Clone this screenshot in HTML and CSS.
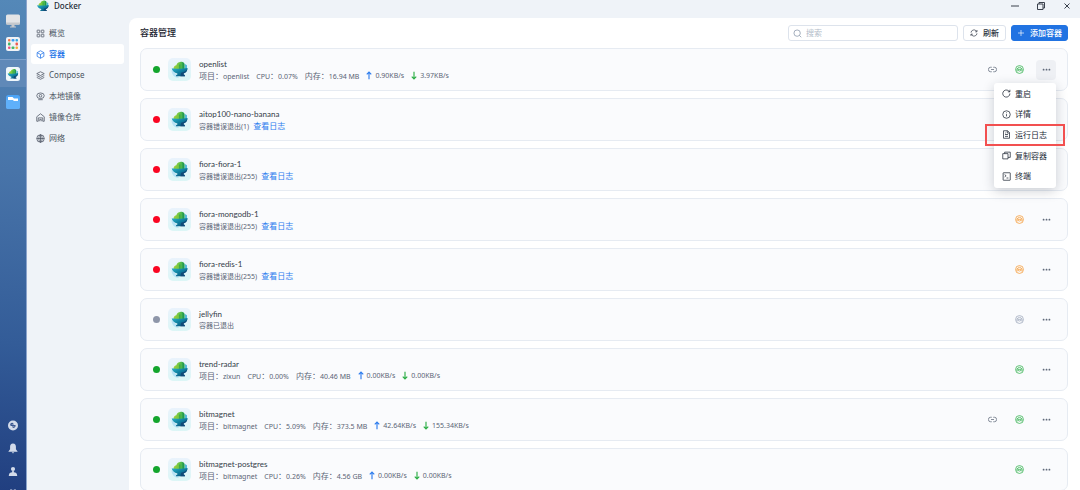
FILE: index.html
```html
<!DOCTYPE html>
<html lang="zh-CN">
<head>
<meta charset="utf-8">
<title>Docker</title>
<link rel="stylesheet" href="styles.css">
</head>
<body>
<svg class="sprite" aria-hidden="true">
  <defs>
    <linearGradient id="g-bowl" x1="0" y1="0" x2="1" y2="1"><stop offset="0" stop-color="#2fb4cc"/><stop offset=".5" stop-color="#0f7f9f"/><stop offset="1" stop-color="#124a78"/></linearGradient>
    <linearGradient id="g-leaf" x1="0" y1="0" x2="1" y2="0"><stop offset="0" stop-color="#a5d036"/><stop offset=".5" stop-color="#6cc644"/><stop offset="1" stop-color="#28a55a"/></linearGradient>
    <linearGradient id="g-tile" x1="0" y1="0" x2="0" y2="1"><stop offset="0" stop-color="#eaf3fc"/><stop offset="1" stop-color="#dcf6f6"/></linearGradient>
    <linearGradient id="g-folder" x1="0" y1="0" x2="0" y2="1"><stop offset="0" stop-color="#4aa2f5"/><stop offset="1" stop-color="#6bb8fb"/></linearGradient>
  </defs>
  <symbol id="plant" viewBox="0 0 24 24">
    <path fill="url(#g-leaf)" d="M3 12c-.5-3 1-5.500 4-6C8 3 10.500 1.500 12.500 1.500c1-.8 4-.8 5 .5 1 .5 1.500 1.500 1.500 3v7z"/>
    <path fill="#22994e" d="M11.500 5h1.300v7h-1.300zM16 2.500c1.500 0 2.500 1 2.500 2.500V12H16z"/>
    <path fill="#4fb8d8" d="M19.500 4.500l3 1.500v7l-3-1z"/>
    <path fill="url(#g-bowl)" d="M0 10.500c6 1 16 1 23.500-.5-.3 4.500-2.500 7-6 8v1.500c1.500.3 2 1 2 2.500H6.500c0-1.500.5-2.200 2-2.500V18C4 17 1 14.500 0 10.500z"/>
    <path fill="#124a78" d="M14 17c4-.5 7-2.500 9-5-.8 3.500-2.500 5.300-5.500 6v1.500c1.500.3 2 1 2 2.500H13z"/>
  </symbol>
  <symbol id="logo" viewBox="0 0 46 46"><rect width="46" height="46" rx="10" fill="url(#g-tile)"/><path fill="#a8dcf4" opacity=".7" d="M7 24c5 2 11 11 15 16-8 0-15-6-15-16z"/><use href="#plant" x="7" y="6" width="33" height="33"/></symbol>
  <symbol id="grid" viewBox="0 0 24 24"><rect x="3" y="3" width="7" height="7" rx="1"/><rect x="14" y="3" width="7" height="7" rx="1"/><rect x="3" y="14" width="7" height="7" rx="1"/><rect x="14" y="14" width="7" height="7" rx="1"/></symbol>
  <symbol id="cube" viewBox="0 0 24 24"><path d="M12 2l9 5v10l-9 5-9-5V7zM3 7l9 5 9-5M12 12v10"/></symbol>
  <symbol id="layers" viewBox="0 0 24 24"><path d="M12 2l10 5-10 5L2 7zM2 12l10 5 10-5M2 17l10 5 10-5"/></symbol>
  <symbol id="disk" viewBox="0 0 24 24"><ellipse cx="12" cy="10" rx="10" ry="7.500"/><circle cx="12" cy="10" r="3.500"/><path d="M6 20.500h12"/></symbol>
  <symbol id="house" viewBox="0 0 24 24"><path d="M2 22V10l10-8 10 8v12h-4v-9H6v9zM10 22v-5h4v5"/></symbol>
  <symbol id="globe" viewBox="0 0 24 24"><circle cx="12" cy="12" r="10"/><ellipse cx="12" cy="12" rx="4.500" ry="10"/><path d="M2 12h20M12 2v20"/></symbol>
  <symbol id="search" viewBox="0 0 24 24"><circle cx="11" cy="11" r="8.500"/><path d="M17.500 17.500L22 22"/></symbol>
  <symbol id="sync" viewBox="0 0 24 24"><path d="M3 11a9 9 0 0 1 16-5l2 2M21 3v5.500h-5.500M21 13a9 9 0 0 1-16 5l-2-2M3 21v-5.500h5.500"/></symbol>
  <symbol id="plus" viewBox="0 0 24 24"><path d="M12 3v18M3 12h18"/></symbol>
  <symbol id="link" viewBox="0 0 24 24"><path d="M10 6H7a6 6 0 0 0 0 12h3M14 6h3a6 6 0 0 1 0 12h-3M8 12h8"/></symbol>
  <symbol id="swirl" viewBox="0 0 24 24"><circle cx="12" cy="12" r="10.500"/><path d="M6 17a7 7 0 1 1 12 0"/><path d="M7.500 11.500h9a4.500 4.500 0 0 1-9 0z"/></symbol>
  <symbol id="dots" viewBox="0 0 24 24"><g fill="currentColor" stroke="none"><rect x="2" y="10" width="4.500" height="4.500" rx="1.500"/><rect x="9.800" y="10" width="4.500" height="4.500" rx="1.500"/><rect x="17.500" y="10" width="4.500" height="4.500" rx="1.500"/></g></symbol>
  <symbol id="up" viewBox="0 0 16 24"><path d="M8 22V3M2 9l6-6 6 6"/></symbol>
  <symbol id="down" viewBox="0 0 16 24"><path d="M8 2v19M2 15l6 6 6-6"/></symbol>
  <symbol id="restart" viewBox="0 0 24 24"><path d="M21 12a9.500 9.500 0 1 1-3.500-7.200L21 7.500M21 2v5.500h-5.500"/></symbol>
  <symbol id="info" viewBox="0 0 24 24"><circle cx="12" cy="12" r="10"/><path d="M12 11v6M12 6.500v2"/></symbol>
  <symbol id="log" viewBox="0 0 24 24"><path d="M4 2h11l5 5v15H4zM14 2v6h6M8 12h8M8 17h8M8 8h2"/></symbol>
  <symbol id="copy" viewBox="0 0 24 24"><path d="M2 7h14v14H2zM7 7V3h15v14h-6"/></symbol>
  <symbol id="term" viewBox="0 0 24 24"><rect x="3" y="2" width="19" height="20" rx="1"/><path d="M7 7l4 3-4 3M12 16h5"/></symbol>
</svg>

<div class="desktop">
  <aside class="dock">
    <button class="dock-item" aria-label="桌面"><svg viewBox="0 0 28 28"><rect x="0" y="1" width="28" height="20" rx="3" fill="#e3e4e6"/><path fill="#c5c8cc" d="M0 17h28v1.500a3 3 0 0 1-3 3H3a3 3 0 0 1-3-3zM11 21h6v4h-6zM8 25h12v2H8z"/></svg></button>
    <button class="dock-item" aria-label="应用"><svg viewBox="0 0 28 28"><rect width="28" height="28" rx="4" fill="#f1f3f6"/><rect x="4" y="4" width="5" height="5" rx="2" fill="#f2784b"/><rect x="11" y="4" width="6" height="5" rx="2" fill="#3f9cf0"/><rect x="19" y="4" width="5" height="5" rx="2" fill="#3aa7dd"/><rect x="4" y="11" width="5" height="6" rx="2" fill="#3cb464"/><rect x="19" y="11" width="5" height="6" rx="2" fill="#ef5b50"/><rect x="4" y="19" width="5" height="5" rx="2" fill="#eb4f7d"/><rect x="11" y="19" width="6" height="5" rx="2" fill="#46b86a"/><rect x="19" y="19" width="5" height="5" rx="2" fill="#f5ad35"/></svg></button>
    <button class="dock-item dock-item--active" aria-label="Docker"><svg viewBox="0 0 28 28"><rect width="28" height="28" rx="5" fill="#f0f7fb"/><use href="#plant" x="3" y="3" width="22" height="22"/></svg></button>
    <button class="dock-item" aria-label="文件"><svg viewBox="0 0 28 28"><rect width="28" height="28" rx="5" fill="url(#g-folder)"/><path fill="#fff" d="M4 4h9l3 3h8v5H16l-3-2H4z"/><path fill="#5fb0fa" d="M0 10h12l3 2h13v11a5 5 0 0 1-5 5H5a5 5 0 0 1-5-5z"/></svg></button>
    <div class="dock-foot">
      <button class="dock-tool" aria-label="加速"><svg viewBox="0 0 24 24"><circle cx="12" cy="12" r="12" fill="#d3dbea"/><path fill="#3a5790" d="M6 7c2-2 6-2 7 0v4h5c1 3-1 6-4 7-3 0-4-2-3-5H7c-2-1-2-4-1-6z"/><path fill="#d3dbea" d="M9 9h2v2H9zM13 14h2v2h-2z"/></svg></button>
      <button class="dock-tool" aria-label="通知"><svg viewBox="0 0 24 24" fill="#d3dbea"><path d="M12 0c5 0 7 4 7 8v6l4 5v1H1v-1l4-5V8c0-4 2-8 7-8zM9 21h6l-3 3z"/></svg></button>
      <button class="dock-tool" aria-label="用户"><svg viewBox="0 0 24 24" fill="#d3dbea"><circle cx="12" cy="6" r="5"/><path d="M10 10h4v4c5 0 7 2 8 7v2H2v-2c1-5 3-7 8-7z"/></svg></button>
      <button class="dock-tool" aria-label="菜单"><svg viewBox="0 0 24 24" fill="#d3dbea"><rect x="5" y="0" width="5" height="5"/><rect x="14" y="0" width="5" height="5"/></svg></button>
    </div>
  </aside>

  <div class="window">
    <header class="titlebar">
      <svg class="titlebar-logo"><use href="#plant"/></svg>
      <span class="titlebar-name">Docker</span>
      <button class="win-btn" aria-label="最小化"><svg viewBox="0 0 16 16"><path d="M0 8h16"/></svg></button>
      <button class="win-btn" aria-label="还原"><svg viewBox="0 0 16 16"><path d="M4 4V1h11v11h-3M1 4h11v11H1z"/></svg></button>
      <button class="win-btn win-btn--close" aria-label="关闭"><svg viewBox="0 0 16 16"><path d="M3 3l10 10M13 3L3 13"/></svg></button>
    </header>

    <nav class="side">
      <a class="side-item" href="#"><svg class="icon"><use href="#grid"/></svg>概览</a>
      <a class="side-item side-item--active" href="#"><svg class="icon"><use href="#cube"/></svg>容器</a>
      <a class="side-item" href="#"><svg class="icon"><use href="#layers"/></svg>Compose</a>
      <a class="side-item" href="#"><svg class="icon"><use href="#disk"/></svg>本地镜像</a>
      <a class="side-item" href="#"><svg class="icon"><use href="#house"/></svg>镜像仓库</a>
      <a class="side-item" href="#"><svg class="icon"><use href="#globe"/></svg>网络</a>
    </nav>

    <main class="main">
      <div class="toolbar">
        <h1 class="toolbar-title">容器管理</h1>
        <label class="search"><svg class="icon"><use href="#search"/></svg><input class="search-input" type="text" placeholder="搜索" aria-label="搜索"></label>
        <button class="btn"><svg class="icon"><use href="#sync"/></svg>刷新</button>
        <button class="btn btn--primary"><svg class="icon"><use href="#plus"/></svg>添加容器</button>
      </div>

      <div class="list">
        <article class="card">
          <span class="dot dot--green"></span><svg class="logo"><use href="#logo"/></svg>
          <div class="info">
            <div class="name">openlist</div>
            <div class="meta"><span><span class="cn">项目：</span>openlist</span><span>CPU<span class="cn">：</span>0.07%</span><span><span class="cn">内存：</span>16.94 MB</span><span class="rate"><svg class="arrow arrow--up"><use href="#up"/></svg>0.90KB/s</span><span class="rate"><svg class="arrow arrow--down"><use href="#down"/></svg>3.97KB/s</span></div>
          </div>
          <div class="actions">
            <button class="act" aria-label="链接"><svg class="icon"><use href="#link"/></svg></button>
            <button class="act act--green" aria-label="状态"><svg class="icon"><use href="#swirl"/></svg></button>
            <button class="act act--open" aria-label="更多"><svg class="icon"><use href="#dots"/></svg></button>
            <div class="menu">
              <button class="menu-item"><svg class="icon"><use href="#restart"/></svg>重启</button>
              <button class="menu-item"><svg class="icon"><use href="#info"/></svg>详情</button>
              <button class="menu-item menu-item--marked"><svg class="icon"><use href="#log"/></svg>运行日志</button>
              <button class="menu-item"><svg class="icon"><use href="#copy"/></svg>复制容器</button>
              <button class="menu-item"><svg class="icon"><use href="#term"/></svg>终端</button>
            </div>
          </div>
        </article>

        <article class="card">
          <span class="dot dot--red"></span><svg class="logo"><use href="#logo"/></svg>
          <div class="info">
            <div class="name">aitop100-nano-banana</div>
            <div class="status">容器错误退出(1)<a class="log-link" href="#">查看日志</a></div>
          </div>
        </article>

        <article class="card">
          <span class="dot dot--red"></span><svg class="logo"><use href="#logo"/></svg>
          <div class="info">
            <div class="name">fiora-fiora-1</div>
            <div class="status">容器错误退出(255)<a class="log-link" href="#">查看日志</a></div>
          </div>
        </article>

        <article class="card">
          <span class="dot dot--red"></span><svg class="logo"><use href="#logo"/></svg>
          <div class="info">
            <div class="name">fiora-mongodb-1</div>
            <div class="status">容器错误退出(255)<a class="log-link" href="#">查看日志</a></div>
          </div>
          <div class="actions">
            <button class="act act--orange" aria-label="状态"><svg class="icon"><use href="#swirl"/></svg></button>
            <button class="act" aria-label="更多"><svg class="icon"><use href="#dots"/></svg></button>
          </div>
        </article>

        <article class="card">
          <span class="dot dot--red"></span><svg class="logo"><use href="#logo"/></svg>
          <div class="info">
            <div class="name">fiora-redis-1</div>
            <div class="status">容器错误退出(255)<a class="log-link" href="#">查看日志</a></div>
          </div>
          <div class="actions">
            <button class="act act--orange" aria-label="状态"><svg class="icon"><use href="#swirl"/></svg></button>
            <button class="act" aria-label="更多"><svg class="icon"><use href="#dots"/></svg></button>
          </div>
        </article>

        <article class="card">
          <span class="dot dot--gray"></span><svg class="logo"><use href="#logo"/></svg>
          <div class="info">
            <div class="name">jellyfin</div>
            <div class="status">容器已退出</div>
          </div>
          <div class="actions">
            <button class="act act--gray" aria-label="状态"><svg class="icon"><use href="#swirl"/></svg></button>
            <button class="act" aria-label="更多"><svg class="icon"><use href="#dots"/></svg></button>
          </div>
        </article>

        <article class="card">
          <span class="dot dot--green"></span><svg class="logo"><use href="#logo"/></svg>
          <div class="info">
            <div class="name">trend-radar</div>
            <div class="meta"><span><span class="cn">项目：</span>zixun</span><span>CPU<span class="cn">：</span>0.00%</span><span><span class="cn">内存：</span>40.46 MB</span><span class="rate"><svg class="arrow arrow--up"><use href="#up"/></svg>0.00KB/s</span><span class="rate"><svg class="arrow arrow--down"><use href="#down"/></svg>0.00KB/s</span></div>
          </div>
          <div class="actions">
            <button class="act act--green" aria-label="状态"><svg class="icon"><use href="#swirl"/></svg></button>
            <button class="act" aria-label="更多"><svg class="icon"><use href="#dots"/></svg></button>
          </div>
        </article>

        <article class="card">
          <span class="dot dot--green"></span><svg class="logo"><use href="#logo"/></svg>
          <div class="info">
            <div class="name">bitmagnet</div>
            <div class="meta"><span><span class="cn">项目：</span>bitmagnet</span><span>CPU<span class="cn">：</span>5.09%</span><span><span class="cn">内存：</span>373.5 MB</span><span class="rate"><svg class="arrow arrow--up"><use href="#up"/></svg>42.64KB/s</span><span class="rate"><svg class="arrow arrow--down"><use href="#down"/></svg>155.34KB/s</span></div>
          </div>
          <div class="actions">
            <button class="act" aria-label="链接"><svg class="icon"><use href="#link"/></svg></button>
            <button class="act act--green" aria-label="状态"><svg class="icon"><use href="#swirl"/></svg></button>
            <button class="act" aria-label="更多"><svg class="icon"><use href="#dots"/></svg></button>
          </div>
        </article>

        <article class="card">
          <span class="dot dot--green"></span><svg class="logo"><use href="#logo"/></svg>
          <div class="info">
            <div class="name">bitmagnet-postgres</div>
            <div class="meta"><span><span class="cn">项目：</span>bitmagnet</span><span>CPU<span class="cn">：</span>0.26%</span><span><span class="cn">内存：</span>4.56 GB</span><span class="rate"><svg class="arrow arrow--up"><use href="#up"/></svg>0.00KB/s</span><span class="rate"><svg class="arrow arrow--down"><use href="#down"/></svg>0.00KB/s</span></div>
          </div>
          <div class="actions">
            <button class="act act--green" aria-label="状态"><svg class="icon"><use href="#swirl"/></svg></button>
            <button class="act" aria-label="更多"><svg class="icon"><use href="#dots"/></svg></button>
          </div>
        </article>
      </div>
    </main>
  </div>
</div>
</body>
</html>
```
FILE: styles.css
```css
* { box-sizing: border-box; }
body {
  margin: 0;
  height: 100vh;
  overflow: hidden;
  font: 8px/12px "Noto Sans", "Noto Sans CJK SC", sans-serif;
  color: #3f4754;
}
button { border: 0; padding: 0; background: none; font: inherit; color: inherit; display: flex; align-items: center; justify-content: center; }
a { color: inherit; text-decoration: none; }
svg { display: block; flex: none; }
.sprite { position: absolute; width: 0; height: 0; }
.icon { width: 9px; height: 9px; fill: none; stroke: currentColor; stroke-width: 2; }

.desktop { display: flex; height: 100vh; background: #eff3f8; }

/* Dock */
.dock {
  width: 27px;
  flex: none;
  display: flex;
  flex-direction: column;
  padding: 9px 1px 0 0;
  border-right: 1px solid #8ba4cc;
  background: linear-gradient(185deg, #5488b8 0%, #4874a9 35%, #335c98 70%, #213f80 100%);
}
.dock-item { height: 23px; }
.dock-item svg { width: 14px; height: 14px; }
.dock-item--active { height: 28px; margin: 4px -1px 0 0; padding-right: 1px; border-top: 1px solid #7c9fca; background: #6089b8; }
.dock-item--active + .dock-item { height: 30px; }
.dock-foot { margin-top: auto; display: flex; flex-direction: column; align-items: center; gap: 12px; height: 70px; overflow: hidden; }
.dock-tool svg { width: 10px; height: 11px; }

/* Window */
.window {
  flex: 1;
  min-width: 0;
  display: grid;
  grid-template: 18px 1fr / 102px 1fr;
}
.titlebar { grid-column: 1 / -1; display: flex; align-items: center; padding: 0 8px 6px 10px; }
.titlebar-logo { width: 12px; height: 12px; }
.titlebar-name { margin: 0 auto 0 5px; font-weight: 500; color: #222a36; }
.win-btn { width: 10px; height: 12px; margin-left: 16px; }
.win-btn svg { width: 8px; height: 8px; fill: none; stroke: #3a414d; stroke-width: 2; }

.side { display: flex; flex-direction: column; gap: 1px; padding: 5px 5px 0 4px; }
.side-item { display: flex; align-items: center; gap: 4px; height: 20px; padding-left: 5px; border-radius: 3px; color: #4b5361; }
.side-item--active { background: #fff; color: #2173e8; font-weight: 500; }

.main { min-width: 0; min-height: 0; padding: 7px 12px 0 11px; background: #fff; border-top-left-radius: 8px; overflow: hidden; }
.toolbar { display: flex; align-items: center; gap: 5px; height: 16px; margin-bottom: 7px; }
.toolbar-title { margin: 0 auto 0 0; font-size: 9px; font-weight: 500; color: #1c2430; }
.search { display: flex; align-items: center; gap: 4px; width: 170px; height: 16px; padding: 0 4px; border: 1px solid #dde3ec; border-radius: 3px; color: #8794a8; }
.search-input { flex: 1; min-width: 0; border: 0; padding: 0; outline: 0; background: none; font: inherit; }
.search-input::placeholder { color: #b3bcc9; }
.btn { gap: 5px; height: 16px; padding: 0 6px; border: 1px solid #dde3ec; border-radius: 3px; background: #fff; color: #2d3542; font-weight: 500; }
.btn .icon { width: 8px; height: 8px; }
.btn--primary { padding: 0 5px; border-color: #2173e2; background: #2173e2; color: #fff; }

/* Container cards */
.list { display: flex; flex-direction: column; gap: 7px; }
.card { display: flex; align-items: center; gap: 8px; height: 43px; flex: none; padding: 0 11px 0 12px; border: 1px solid #e6ebf2; border-radius: 7px; background: #fafbfd; }
.dot { width: 7px; height: 7px; border-radius: 50%; }
.dot--green { background: #14a52d; }
.dot--red { background: #fa0522; }
.dot--gray { background: #8e96a9; }
.logo { width: 23px; height: 23px; }
.info { flex: 1; min-width: 0; white-space: nowrap; }
.name { font-family: Lato, "Noto Sans CJK SC", sans-serif; color: #333b48; }
.meta { display: flex; gap: 7px; }
.meta, .status { font-size: 7px; height: 12px; color: #5b6576; }
.cn, .log-link { font-size: 8px; }
.log-link { margin-left: 4px; color: #2b7bee; }
.rate { display: flex; align-items: center; gap: 3px; }
.arrow { width: 6px; height: 9px; fill: none; stroke: currentColor; stroke-width: 3; }
.arrow--up { color: #2b7bee; }
.arrow--down { color: #28ad43; }

.actions { position: relative; display: flex; gap: 7px; }
.act { width: 20px; height: 20px; border-radius: 4px; color: #5f697a; }
.act--open { background: #eef0f4; }
.act--green { color: #30b04c; }
.act--orange { color: #f59a33; }
.act--gray { color: #9ba6ba; }

/* Overflow menu */
.menu {
  position: absolute;
  top: 23px;
  right: 0;
  z-index: 1;
  display: grid;
  grid-auto-rows: 1fr;
  width: 62px;
  height: 105px;
  padding: 1px 0;
  border-radius: 3px;
  background: #fff;
  box-shadow: 0 3px 12px rgba(30, 40, 60, .22);
  color: #222a36;
}
.menu-item { position: relative; justify-content: flex-start; gap: 4px; padding-left: 8px; }
.menu-item--marked::after { content: ""; position: absolute; inset: -1px -9px; border: 2px solid #f25050; }
```
